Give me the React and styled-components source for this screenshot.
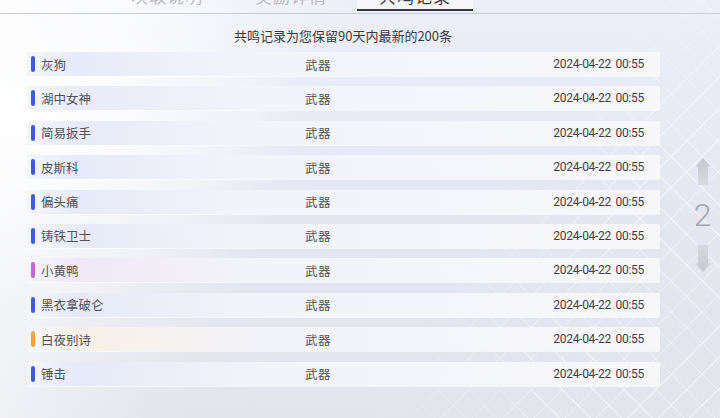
import React from "react";
import styled, { createGlobalStyle } from "styled-components";

const GlobalStyle = createGlobalStyle`
  html, body { margin: 0; padding: 0; }
  body { background: #e4e5ee; font-family: "Noto Sans CJK SC", "Noto Sans", sans-serif; }
`;

const Page = styled.div`
  position: relative;
  width: 720px;
  height: 418px;
  overflow: hidden;
  background:
    linear-gradient(115deg, rgba(255,255,255,0.85) 0%, rgba(255,255,255,0.55) 18%, rgba(255,255,255,0) 42%),
    radial-gradient(ellipse 260px 200px at 40px 120px, rgba(255,255,255,0.9), rgba(255,255,255,0) 100%),
    linear-gradient(180deg, #eceef8 0%, #e4e6f1 50%, #e3e4ec 100%);
  &::before {
    content: "";
    position: absolute;
    inset: 0;
    pointer-events: none;
    background:
      repeating-linear-gradient(45deg, rgba(255,255,255,0) 0 21px, rgba(255,255,255,0.6) 21px 22px),
      repeating-linear-gradient(-45deg, rgba(255,255,255,0) 0 21px, rgba(255,255,255,0.6) 21px 22px);
    -webkit-mask-image: linear-gradient(120deg, transparent 0%, transparent 62%, rgba(0,0,0,0.8) 82%);
    mask-image: linear-gradient(120deg, transparent 0%, transparent 62%, rgba(0,0,0,0.8) 82%);
  }
`;

const Content = styled.div`
  position: relative;
  display: flex;
  flex-direction: column;
  height: 100%;
`;

const TabBar = styled.div`
  display: flex;
  gap: 8px;
  height: 14px;
  padding-left: 109px;
  border-bottom: 1px solid #c9cad3;
  box-sizing: border-box;
`;

const Tab = styled.div`
  width: 116px;
  height: 11px;
  overflow: hidden;
  display: flex;
  justify-content: center;
  box-sizing: border-box;
  background: ${(p) => (p.$active ? "#f7f7f9" : "transparent")};
  border-bottom: ${(p) => (p.$active ? "2px solid #36373c" : "2px solid transparent")};
  color: ${(p) => (p.$active ? "#3b3c42" : "#b9bac4")};
  font-size: 17px;
  line-height: 17px;
  letter-spacing: 1px;
`;

const TabLabel = styled.span`
  margin-top: -13px;
  white-space: nowrap;
`;

const Notice = styled.div`
  height: 38px;
  display: flex;
  align-items: center;
  justify-content: center;
  box-sizing: border-box;
  padding-top: 4px;
  color: #3a3b41;
  font-size: 13px;
  font-weight: 400;
  width: 686px;
`;

const Body = styled.div`
  display: flex;
`;

const List = styled.div`
  display: flex;
  flex-direction: column;
  gap: 10.4px;
  margin-left: 27px;
  width: 633px;
`;

const tints = {
  blue: "rgba(230,233,248,0.95)",
  purple: "rgba(240,232,246,0.95)",
  gold: "rgba(249,240,230,0.95)",
};
const bars = {
  blue: "#3b5be3",
  purple: "#c466d6",
  gold: "#f0a53f",
};

const Row = styled.div`
  height: 24px;
  display: grid;
  grid-template-columns: 274px 1fr auto;
  align-items: center;
  padding: 0 16px 0 4px;
  box-sizing: border-box;
  border-radius: 2px;
  background: linear-gradient(
    90deg,
    rgba(245,246,252,0.95) 0px,
    ${(p) => tints[p.$tone]} 50px,
    rgba(244,245,251,0.93) 240px,
    rgba(248,248,251,0.95) 100%
  );
  box-shadow: 0 1px 0 rgba(255,255,255,0.6);
  color: #505158;
  font-size: 12.5px;
`;

const NameCell = styled.div`
  display: flex;
  align-items: center;
  gap: 6px;
`;

const Bar = styled.span`
  width: 4px;
  height: 16px;
  border-radius: 2px;
  background: ${(p) => bars[p.$tone]};
`;

const TypeCell = styled.div`
  letter-spacing: 0.5px;
`;

const DateCell = styled.div`
  font-family: Roboto, "Noto Sans", sans-serif;
  font-size: 12px;
  letter-spacing: -0.3px;
  color: #3f4047;
  word-spacing: 2px;
`;

const Pager = styled.div`
  flex: 1;
  display: flex;
  flex-direction: column;
  align-items: center;
  padding-top: 106px;
  padding-left: 25px;
`;

const PageNum = styled.div`
  font-family: Roboto, sans-serif;
  font-weight: 300;
  font-size: 32px;
  line-height: 58px;
  color: #a6a7b1;
`;

const Arrow = ({ down }) => (
  <svg width="16" height="28" viewBox="0 0 16 28" style={{ transform: down ? "rotate(180deg)" : "none" }}>
    <defs>
      <linearGradient id={down ? "ad" : "au"} x1="0" y1="0" x2="0" y2="1">
        <stop offset="0" stopColor="#c6c7ce" />
        <stop offset="1" stopColor="#d9dae0" />
      </linearGradient>
    </defs>
    <path d="M8 0 L15.5 8.5 L13 8.5 L13 27 L3 27 L3 8.5 L0.5 8.5 Z" fill={`url(#${down ? "ad" : "au"})`} />
  </svg>
);

const rows = [
  ["灰狗", "blue"],
  ["湖中女神", "blue"],
  ["简易扳手", "blue"],
  ["皮斯科", "blue"],
  ["偏头痛", "blue"],
  ["铸铁卫士", "blue"],
  ["小黄鸭", "purple"],
  ["黑衣拿破仑", "blue"],
  ["白夜别诗", "gold"],
  ["锤击", "blue"],
];

export default function App() {
  return (
    <>
      <GlobalStyle />
      <Page>
        <Content>
          <TabBar>
            <Tab><TabLabel>唤取说明</TabLabel></Tab>
            <Tab><TabLabel>奖励详情</TabLabel></Tab>
            <Tab $active><TabLabel>共鸣记录</TabLabel></Tab>
          </TabBar>
          <Notice>共鸣记录为您保留90天内最新的200条</Notice>
          <Body>
            <List>
              {rows.map(([name, tone], i) => (
                <Row key={i} $tone={tone}>
                  <NameCell>
                    <Bar $tone={tone} />
                    <span>{name}</span>
                  </NameCell>
                  <TypeCell>武器</TypeCell>
                  <DateCell>2024-04-22 00:55</DateCell>
                </Row>
              ))}
            </List>
            <Pager>
              <Arrow />
              <PageNum>2</PageNum>
              <Arrow down />
            </Pager>
          </Body>
        </Content>
      </Page>
    </>
  );
}
